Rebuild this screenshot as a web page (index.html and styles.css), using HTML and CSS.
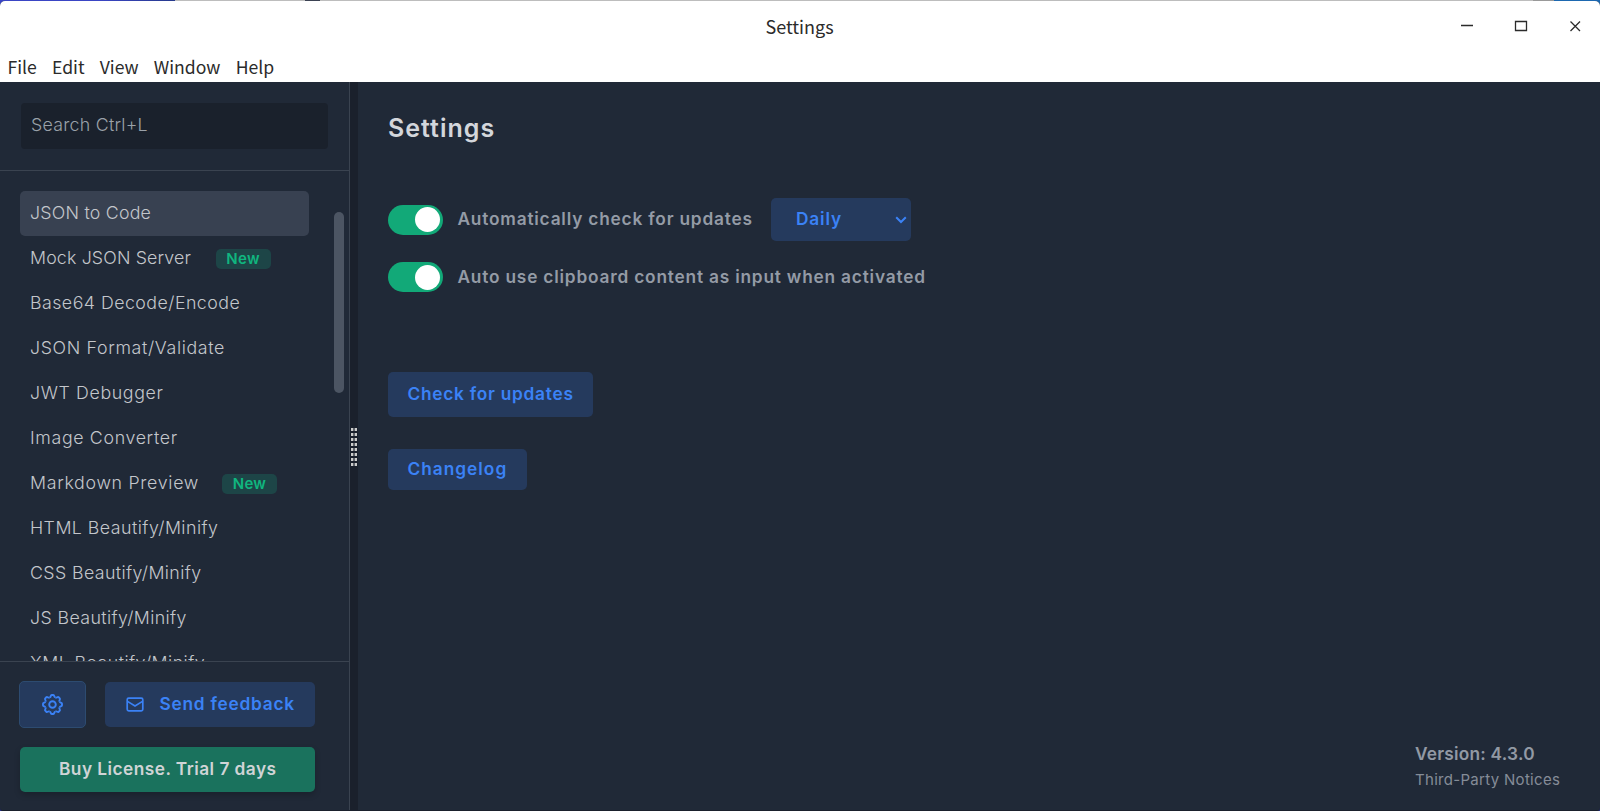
FILE: index.html
```html
<!DOCTYPE html>
<html lang="en">
<head>
<meta charset="utf-8">
<title>Settings</title>
<link rel="stylesheet" href="styles.css">
</head>
<body>
<div class="desktop">
  <div class="window">
    <header class="titlebar">
      <div class="caption">
        <span class="title">Settings</span>
        <div class="controls">
          <svg width="14" height="14" viewBox="0 0 14 14"><path d="M1 6.500h12"/></svg>
          <svg width="14" height="14" viewBox="0 0 14 14"><path d="M1.500 2.500h11v9h-11z"/></svg>
          <svg width="14" height="14" viewBox="0 0 14 14"><path d="M2.500 2.500l9.500 9.500M12 2.500L2.500 12"/></svg>
        </div>
      </div>
      <nav class="menu"><span>File</span><span>Edit</span><span>View</span><span>Window</span><span>Help</span></nav>
    </header>
    <div class="body">
      <aside class="sidebar">
        <div class="search-area"><div class="search">Search Ctrl+L</div></div>
        <div class="list-area">
          <ul class="list">
            <li class="item active"><span class="json-code">JSON to Code</span></li>
            <li class="item"><span class="mock">Mock JSON Server</span><b class="badge">New</b></li>
            <li class="item"><span class="base64">Base64 Decode/Encode</span></li>
            <li class="item"><span class="json-format">JSON Format/Validate</span></li>
            <li class="item"><span class="jwt">JWT Debugger</span></li>
            <li class="item"><span class="image">Image Converter</span></li>
            <li class="item"><span class="markdown">Markdown Preview</span><b class="badge">New</b></li>
            <li class="item"><span class="html">HTML Beautify/Minify</span></li>
            <li class="item"><span class="css">CSS Beautify/Minify</span></li>
            <li class="item"><span class="js">JS Beautify/Minify</span></li>
            <li class="item"><span class="xml">XML Beautify/Minify</span></li>
          </ul>
          <div class="scroll"><div class="thumb"></div></div>
        </div>
        <div class="footer">
          <div class="row">
            <button class="btn gear" aria-label="Settings">
              <svg width="21" height="21" viewBox="-10.500 -10.500 21 21">
                <defs><path id="tooth" d="M-2.950-7.100Q-1.900-7.400-1.700-8.500Q-1.500-9.500-.8-9.500H.8Q1.500-9.500 1.700-8.500Q1.900-7.400 2.950-7.100"/></defs>
                <use href="#tooth"/><use href="#tooth" transform="rotate(45)"/><use href="#tooth" transform="rotate(90)"/><use href="#tooth" transform="rotate(135)"/><use href="#tooth" transform="rotate(180)"/><use href="#tooth" transform="rotate(225)"/><use href="#tooth" transform="rotate(270)"/><use href="#tooth" transform="rotate(315)"/>
                <circle r="3.300"/>
              </svg>
            </button>
            <button class="btn feedback">
              <svg width="18" height="15" viewBox="0 0 18 15"><rect x="1.200" y="1.200" width="15.600" height="12.600" rx="1.500"/><path d="M1.500 4.400L9 9l7.500-4.600"/></svg>
              <span>Send feedback</span>
            </button>
          </div>
          <button class="btn buy">Buy License. Trial 7 days</button>
        </div>
      </aside>
      <div class="gutter"><div class="grip"></div></div>
      <main class="main">
        <h1>Settings</h1>
        <div class="option">
          <span class="toggle"></span><span class="label">Automatically check for updates</span>
          <div class="select"><span>Daily</span><svg width="12" height="8" viewBox="0 0 12 8"><path d="M1.200 1.200L6 6l4.800-4.800"/></svg></div>
        </div>
        <div class="option second"><span class="toggle"></span><span class="label">Auto use clipboard content as input when activated</span></div>
        <button class="btn check">Check for updates</button>
        <button class="btn changelog">Changelog</button>
        <footer class="about"><span class="version">Version: 4.3.0</span><span class="notices">Third-Party Notices</span></footer>
      </main>
    </div>
  </div>
</div>
</body>
</html>
```
FILE: styles.css
```css
* { box-sizing: border-box; }
body { margin: 0; font-family: Inter, sans-serif; font-size: 17.3px; }
svg { display: block; fill: none; stroke: currentColor; flex: none; }

.desktop {
  height: 811px;
  padding-top: 1px;
  background: linear-gradient(90deg, #3a45c4 0 100px, #26398c 175px, #bdbdbd 175px 305px, #3b4252 305px 320px, #bdbdbd 320px 1533px, #999 1533px 1554px, #1d68b0 1554px) top / 100% 8px no-repeat, #2a3190;
}
.window {
  height: 810px;
  display: flex;
  flex-direction: column;
  border-radius: 5px 5px 3px 3px;
  overflow: hidden;
  background: #202937;
  border-bottom: 1px solid #1a202c;
}

.titlebar {
  flex: none;
  height: 81px;
  background: #fff;
  color: #2b2b2b;
  font-family: "Noto Sans CJK SC", sans-serif;
  font-size: 18px;
}
.caption {
  height: 52px;
  display: grid;
  grid-template-columns: 1fr auto 1fr;
  line-height: 50px;
}
.title { grid-column: 2; margin-right: 1px; }
.controls { display: flex; justify-content: flex-end; gap: 40px; padding: 18px 18px 0 0; }
.controls svg { stroke-width: 1.300; }
.menu { display: flex; gap: 15.200px; padding-left: 7.500px; line-height: 27px; font-size: 17.600px; }

.body { flex: 1; min-height: 0; display: flex; }
.sidebar {
  width: 350px;
  flex: none;
  display: flex;
  flex-direction: column;
  border-right: 1px solid #3a4350;
}
.search-area {
  height: 89px;
  flex: none;
  padding: 21px 21px 0;
  border-bottom: 1px solid #3a4350;
}
.search {
  height: 46px;
  padding-left: 10px;
  border-radius: 4px;
  background: #1a212c;
  color: #9aa1a9;
  font-size: 17.800px;
  font-weight: 300;
  line-height: 43px;
  letter-spacing: .25px;
}
.list-area { flex: 1; min-height: 0; display: flex; overflow: hidden; }
.list { width: 309px; flex: none; margin: 0; padding: 20px 0 0 20px; list-style: none; }
.item {
  height: 45px;
  padding-left: 10px;
  display: flex;
  align-items: center;
  border-radius: 5px;
  color: #c3c6cb;
  font-size: 17.800px;
  font-weight: 300;
  line-height: 43px;
  white-space: nowrap;
}
.item > span { height: 45px; }
.item.active { background: #384151; }
.badge {
  width: 55px;
  height: 20px;
  margin: 1px 0 0 24.500px;
  border-radius: 5px;
  background: #1d4547;
  color: #10b67f;
  font-size: 15px;
  font-weight: 600;
  line-height: 20px;
  letter-spacing: .3px;
  text-align: center;
}
.json-code { letter-spacing: .22px; }
.mock { letter-spacing: .15px; }
.base64 { letter-spacing: .46px; }
.json-format { letter-spacing: .65px; }
.jwt { letter-spacing: .62px; }
.image { letter-spacing: .65px; }
.markdown { letter-spacing: .69px; }
.markdown + .badge { margin-left: 23px; }
.html { letter-spacing: .46px; }
.css { letter-spacing: .39px; }
.js { letter-spacing: .38px; }
.xml { letter-spacing: .45px; }
.scroll { padding: 41px 0 0 25px; }
.thumb { width: 10px; height: 181px; border-radius: 5px; background: #4c5563; }

.btn {
  display: flex;
  align-items: center;
  border: 0;
  border-radius: 5px;
  padding: 0 0 2px 19.500px;
  background: #253a5d;
  color: #3b82f6;
  font-family: inherit;
  font-size: 17.3px;
  font-weight: 600;
  letter-spacing: .74px;
  white-space: nowrap;
}
.footer {
  height: 149px;
  flex: none;
  padding: 19px 34px 0 19px;
  border-top: 1px solid #3a4350;
}
.row { display: flex; align-items: center; gap: 19px; }
.gear {
  width: 67px;
  height: 47px;
  padding: 0;
  justify-content: center;
  border: 1px solid #2d4b70;
}
.gear svg { stroke-width: 1.900; }
.feedback { width: 210px; height: 45px; padding: 0 0 0 21px; gap: 15.500px; letter-spacing: .76px; }
.feedback svg { stroke-width: 1.700; }
.feedback span { margin-top: -2px; }
.buy {
  width: 295px;
  height: 45px;
  margin: 19px 0 0 1px;
  padding-left: 39px;
  background: #1a725d;
  color: #d0d4d6;
  letter-spacing: .46px;
  box-shadow: 0 3px 6px rgba(0, 0, 0, .2);
}

.gutter {
  width: 8px;
  flex: none;
  padding: 346px 0 0 1px;
  background: #1a202c;
}
.grip {
  width: 6px;
  height: 38px;
  background:
    linear-gradient(90deg, transparent 2px, rgba(26, 32, 44, .6) 2px 4px, transparent 4px),
    repeating-linear-gradient(#ccc 0 3px, transparent 3px 5px);
}

.main {
  flex: 1;
  display: flex;
  flex-direction: column;
  align-items: flex-start;
  padding: 31px 40px 0 30px;
  font-weight: 600;
}
h1 {
  margin: 0;
  color: #d3d6db;
  font-size: 25px;
  font-weight: 600;
  line-height: 30px;
  letter-spacing: 1px;
}
.option { display: flex; align-items: center; height: 43px; margin-top: 55px; }
.option.second { height: 30px; margin-top: 21px; }
.toggle { width: 55px; height: 30px; border-radius: 15px; background: #12a978; display: flex; padding: 2.500px 3px; justify-content: flex-end; }
.toggle::after { content: ""; width: 25px; height: 25px; border-radius: 50%; background: #fff; }
.label { margin: -2px 0 0 14.500px; color: #949ba6; letter-spacing: .8px; }
.select {
  width: 140px;
  height: 43px;
  margin-left: 18.700px;
  padding: 0 4px 0 24.500px;
  display: flex;
  align-items: center;
  justify-content: space-between;
  border-radius: 5px;
  background: #253a5d;
  color: #3b82f6;
  letter-spacing: .85px;
}
.select span { margin-top: -2px; }
.select svg { stroke-width: 2; }
.check { width: 205px; height: 45px; margin-top: 80px; }
.changelog { width: 139px; height: 41px; margin-top: 32px; letter-spacing: 1px; }
.about { margin: auto 1px 20px; align-self: flex-end; width: 144px; display: flex; flex-direction: column; white-space: nowrap; }
.version { color: #9299a4; line-height: 26px; letter-spacing: .22px; }
.notices { color: #858c97; font-size: 15px; font-weight: 400; line-height: 20px; letter-spacing: .3px; margin-top: 3px; }
```
